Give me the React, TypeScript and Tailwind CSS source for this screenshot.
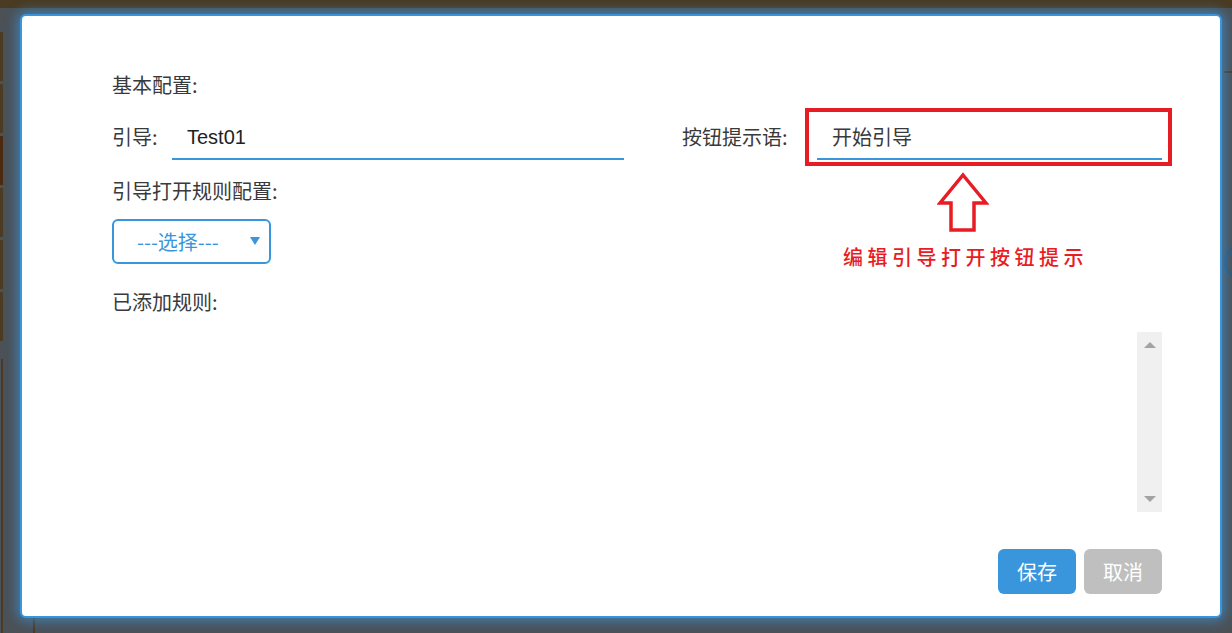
import React from "react";

const cjk = "font-['Noto_Sans_CJK_SC','Noto_Sans',sans-serif]";

export default function App() {
  return (
    <div className={`relative h-[633px] w-[1232px] overflow-hidden bg-[#4b5157] ${cjk}`}>
      {/* dimmed page behind the dialog */}
      <div className="h-[8px] bg-[#4a3b22]" />
      <div className="flex flex-col gap-[3px] pt-[24px] w-[3px]">
        <div className="h-[49px] bg-[#4a3b22]" />
        <div className="h-[49px] bg-[#4a3b22]" />
        <div className="h-[49px] bg-[#4b2a10]" />
        <div className="h-[49px] bg-[#4a3b22]" />
        <div className="h-[49px] bg-[#4a3b22]" />
        <div className="h-[49px] bg-[#4a3b22]" />
      </div>
      <div className="ml-[1px] mt-[18px] h-[300px] w-[2px] bg-[#4a3b22]" />
      <div className="absolute left-[33px] top-[616px] h-[17px] w-[2px] bg-[#4a3b22]" />
      <div className="absolute left-[1224px] top-[71px] h-[2px] w-[8px] bg-[#4a3b22]" />
      <div className="absolute left-[1224px] top-[244px] h-[36px] w-[36px] rounded-full border-2 border-[#1f5a85]" />

      {/* dialog */}
      <div className="absolute left-[20px] top-[14px] h-[604px] w-[1202px] rounded-[6px] border-2 border-[#3996dc] bg-white shadow-[0_0_12px_3px_rgba(58,150,221,0.65)]">
        <div className="flex flex-col pl-[90px] pr-[58px] pt-[55px] text-[20px] text-[#3a3a3a]">
          <div className="leading-[28px]">基本配置:</div>

          <div className="mt-[19px] flex h-[42px] items-center">
            <div className="w-[60px] pb-[4px] leading-[28px]">引导:</div>
            <div className="flex h-[42px] w-[452px] items-center border-b-2 border-[#3996dc] pb-[2px] pl-[15px] font-['Liberation_Sans',sans-serif] text-[#222]">
              Test01
            </div>
            <div className="ml-[58px] w-[135px] pb-[4px] leading-[28px]">按钮提示语:</div>
            <div className="relative flex h-[42px] w-[345px] items-center border-b-2 border-[#3996dc] pb-[2px] pl-[15px]">
              开始引导
              <div className="absolute -left-[12px] -right-[10px] -top-[10px] -bottom-[8px] border-4 border-[#e81c24]" />
            </div>
          </div>

          <div className="mt-[17px] leading-[28px]">引导打开规则配置:</div>

          <div className="relative mt-[14px] flex h-[45px] w-[159px] items-center rounded-[6px] border-2 border-[#3996dc] pl-[23px] text-[#3996dc]">
            ---选择---
            <span className="absolute right-[9px] top-[16px] h-0 w-0 border-x-[5px] border-t-[8px] border-x-transparent border-t-[#3996dc]" />
          </div>

          <div className="mt-[24px] leading-[28px]">已添加规则:</div>

          <div className="mt-[16px] flex h-[180px] justify-end">
            <div className="flex w-[25px] flex-col items-center justify-between bg-[#f0f0f0] py-[10px]">
              <span className="h-0 w-0 border-x-[6px] border-b-[6px] border-x-transparent border-b-[#a3a3a3]" />
              <span className="h-0 w-0 border-x-[6px] border-t-[6px] border-x-transparent border-t-[#a3a3a3]" />
            </div>
          </div>

          <div className="mt-[37px] flex justify-end gap-[8px]">
            <button className="h-[45px] w-[78px] rounded-[6px] bg-[#3996dc] text-[20px] text-white">保存</button>
            <button className="h-[45px] w-[78px] rounded-[6px] bg-[#bfbfbf] text-[20px] text-white">取消</button>
          </div>
        </div>
      </div>

      {/* annotation */}
      <svg className="absolute left-[937px] top-[172px]" width="52" height="62" viewBox="0 0 52 62">
        <polygon
          points="26,3 49,31 37,31 37,58 14,58 14,31 3,31"
          fill="none"
          stroke="#e81c24"
          strokeWidth="3.5"
          strokeLinejoin="miter"
        />
      </svg>
      <div className="absolute left-[843px] top-[243px] text-[20px] font-medium leading-[28px] tracking-[4.5px] text-[#e81c24]">
        编辑引导打开按钮提示
      </div>
    </div>
  );
}
